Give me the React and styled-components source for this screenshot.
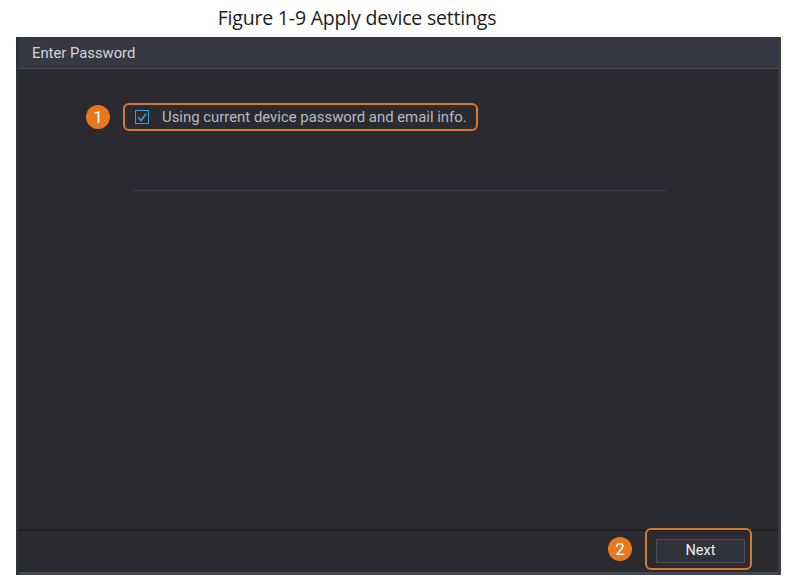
import styled, { createGlobalStyle } from "styled-components";

const GlobalStyle = createGlobalStyle`
  html, body {
    margin: 0;
    padding: 0;
    background: #ffffff;
  }
`;

const Page = styled.div`
  width: 787px;
  height: 580px;
  display: flex;
  flex-direction: column;
  overflow: hidden;
`;

const Caption = styled.div`
  height: 37px;
  display: flex;
  justify-content: center;
  align-items: flex-start;
  padding: 4px 73px 0 0;
  box-sizing: border-box;
  font-family: "Open Sans", "Noto Sans", sans-serif;
  font-size: 19.5px;
  color: #1c1c1c;
  letter-spacing: -0.2px;
`;

const Dialog = styled.div`
  margin-left: 16px;
  width: 765px;
  height: 538px;
  display: flex;
  flex-direction: column;
  background: #2a2a30;
  border-left: 3px solid #2e333e;
  border-right: 3px solid #3a3d46;
  box-sizing: border-box;
  font-family: Roboto, "Liberation Sans", sans-serif;
`;

const TitleBar = styled.div`
  height: 31px;
  display: flex;
  align-items: center;
  padding-left: 13px;
  background: #363843;
  border-bottom: 1px solid #4a4e5a;
  color: #d4d6dc;
  font-size: 14.8px;
`;

const Body = styled.div`
  flex: 1;
  display: flex;
  flex-direction: column;
  padding: 34px 0 0 67px;
`;

const OptionRow = styled.div`
  display: flex;
  align-items: center;
  gap: 13px;
`;

const Badge = styled.div`
  width: 24px;
  height: 24px;
  border-radius: 50%;
  background: #e8781f;
  color: #ffffff;
  font-family: Roboto, "Liberation Sans", sans-serif;
  font-size: 17px;
  display: flex;
  align-items: center;
  justify-content: center;
  flex-shrink: 0;
`;

const Highlight = styled.div`
  display: flex;
  align-items: center;
  gap: ${(p) => p.gap || 0}px;
  padding: ${(p) => p.pad};
  border: 2px solid #d47a2c;
  border-radius: 6px;
  box-sizing: border-box;
`;

const Check = styled.div`
  width: 14px;
  height: 14px;
  border: 1px solid #3c9fd3;
  box-sizing: border-box;
  display: flex;
  align-items: center;
  justify-content: center;
`;

const Label = styled.span`
  color: #b7bac2;
  font-size: 14.9px;
`;

const Separator = styled.div`
  margin-top: 59px;
  margin-left: 45px;
  width: 535px;
  height: 1px;
  background: #3b3b4a;
  box-shadow: 0 1px 0 #2c2b38;
`;

const Footer = styled.div`
  height: 46px;
  flex-shrink: 0;
  border-top: 2px solid #1f1f23;
  border-bottom: 3px solid #444853;
  display: flex;
  align-items: center;
  justify-content: flex-end;
  gap: 13px;
  padding: 0 26px 6px 0;
  box-sizing: border-box;
`;

const Button = styled.button`
  width: 89px;
  height: 24px;
  background: #30323a;
  border: 1px solid #4b4e57;
  color: #f0f0f0;
  font-family: Roboto, "Liberation Sans", sans-serif;
  font-size: 14.5px;
  padding: 0;
`;

const App = () => {
  return (
    <Page>
      <GlobalStyle />
      <Caption>Figure 1-9 Apply device settings</Caption>
      <Dialog>
        <TitleBar>Enter Password</TitleBar>
        <Body>
          <OptionRow>
            <Badge>1</Badge>
            <Highlight pad="3px 9px 3px 10px" gap={13}>
              <Check>
                <svg width="10" height="9" viewBox="0 0 10 9">
                  <path d="M1 4.5 L4 7.5 L9 1" fill="none" stroke="#3c9fd3" strokeWidth="1.6" />
                </svg>
              </Check>
              <Label>Using current device password and email info.</Label>
            </Highlight>
          </OptionRow>
          <Separator />
        </Body>
        <Footer>
          <Badge>2</Badge>
          <Highlight pad="9px 5px 5px 9px">
            <Button>Next</Button>
          </Highlight>
        </Footer>
      </Dialog>
    </Page>
  );
};

export default App;
